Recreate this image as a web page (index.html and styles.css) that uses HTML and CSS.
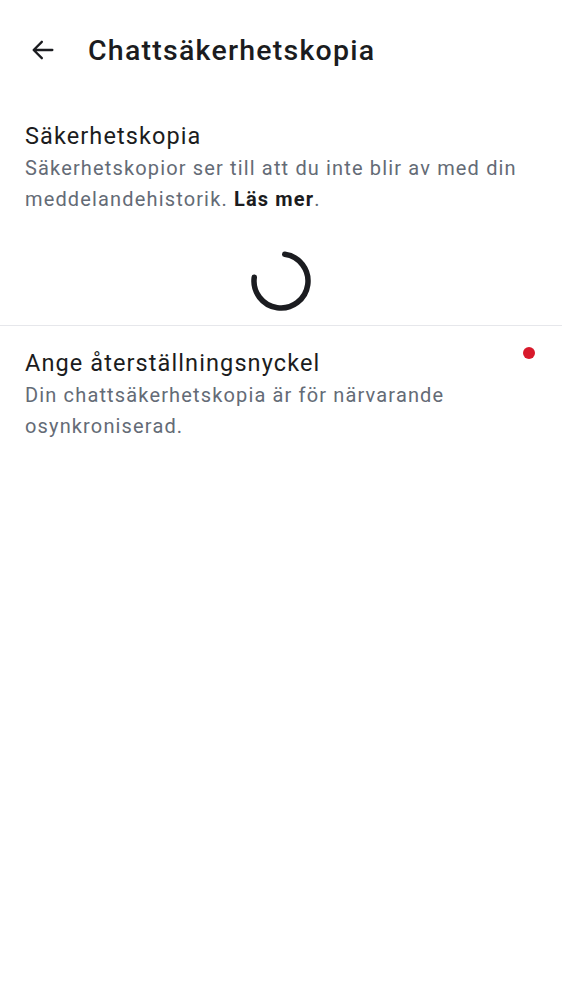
FILE: index.html
```html
<!DOCTYPE html>
<html lang="sv">
<head>
<meta charset="utf-8">
<link rel="stylesheet" href="styles.css">
</head>
<body>
<header class="topbar">
  <button class="back" aria-label="Tillbaka">
    <svg width="28" height="28" viewBox="0 0 24 24"><path d="M20 12H5M11 5l-7 7 7 7" fill="none" stroke="#1b1c20" stroke-width="2" stroke-linecap="round" stroke-linejoin="round"/></svg>
  </button>
  <h1 class="title">Chattsäkerhetskopia</h1>
</header>
<section class="item first">
  <div class="item-title">Säkerhetskopia</div>
  <div class="item-desc">Säkerhetskopior ser till att du inte blir av med din meddelandehistorik. <b>Läs mer</b>.</div>
</section>
<div class="spinner-row">
  <svg width="66" height="66" viewBox="0 0 66 66"><path d="M33 6 A27 27 0 1 1 6 33" fill="none" stroke="#1b1c20" stroke-width="5.5" stroke-linecap="round" transform="rotate(8 33 33)"/></svg>
</div>
<div class="divider"></div>
<section class="item second">
  <div class="item-text">
    <div class="item-title">Ange återställningsnyckel</div>
    <div class="item-desc">Din chattsäkerhetskopia är för närvarande osynkroniserad.</div>
  </div>
  <span class="dot"></span>
</section>
</body>
</html>
```
FILE: styles.css
```css
html, body { margin: 0; padding: 0; background: #fff; }
body { font-family: Roboto, "Noto Sans", sans-serif; color: #1b1c20; width: 562px; }
.topbar { height: 100px; display: flex; align-items: center; }
.back { border: 0; background: none; padding: 0; margin-left: 29px; width: 28px; height: 28px; display: flex; }
.title { margin: 0 0 0 31px; font-size: 28.5px; font-weight: 500; letter-spacing: 1.25px; color: #1b1c20; }
.item { padding: 0 25px; }
.item.first { padding-top: 20px; }
.item-title { font-size: 23.5px; line-height: 32px; letter-spacing: 1.1px; color: #1b1c20; }
.item-desc { font-size: 20px; line-height: 31px; letter-spacing: 1.15px; color: #646b76; margin-top: 1px; }
.item-desc b { color: #1b1c20; font-weight: 700; }
.spinner-row { display: flex; justify-content: center; padding: 33px 0 11px; }
.divider { height: 1px; background: #e6e7eb; }
.item.second { display: flex; justify-content: space-between; align-items: flex-start; padding-top: 21px; padding-right: 27px; }
.item-text { width: 440px; }
.dot { width: 12px; height: 12px; border-radius: 50%; background: #d8192b; margin-top: 0; }
```
